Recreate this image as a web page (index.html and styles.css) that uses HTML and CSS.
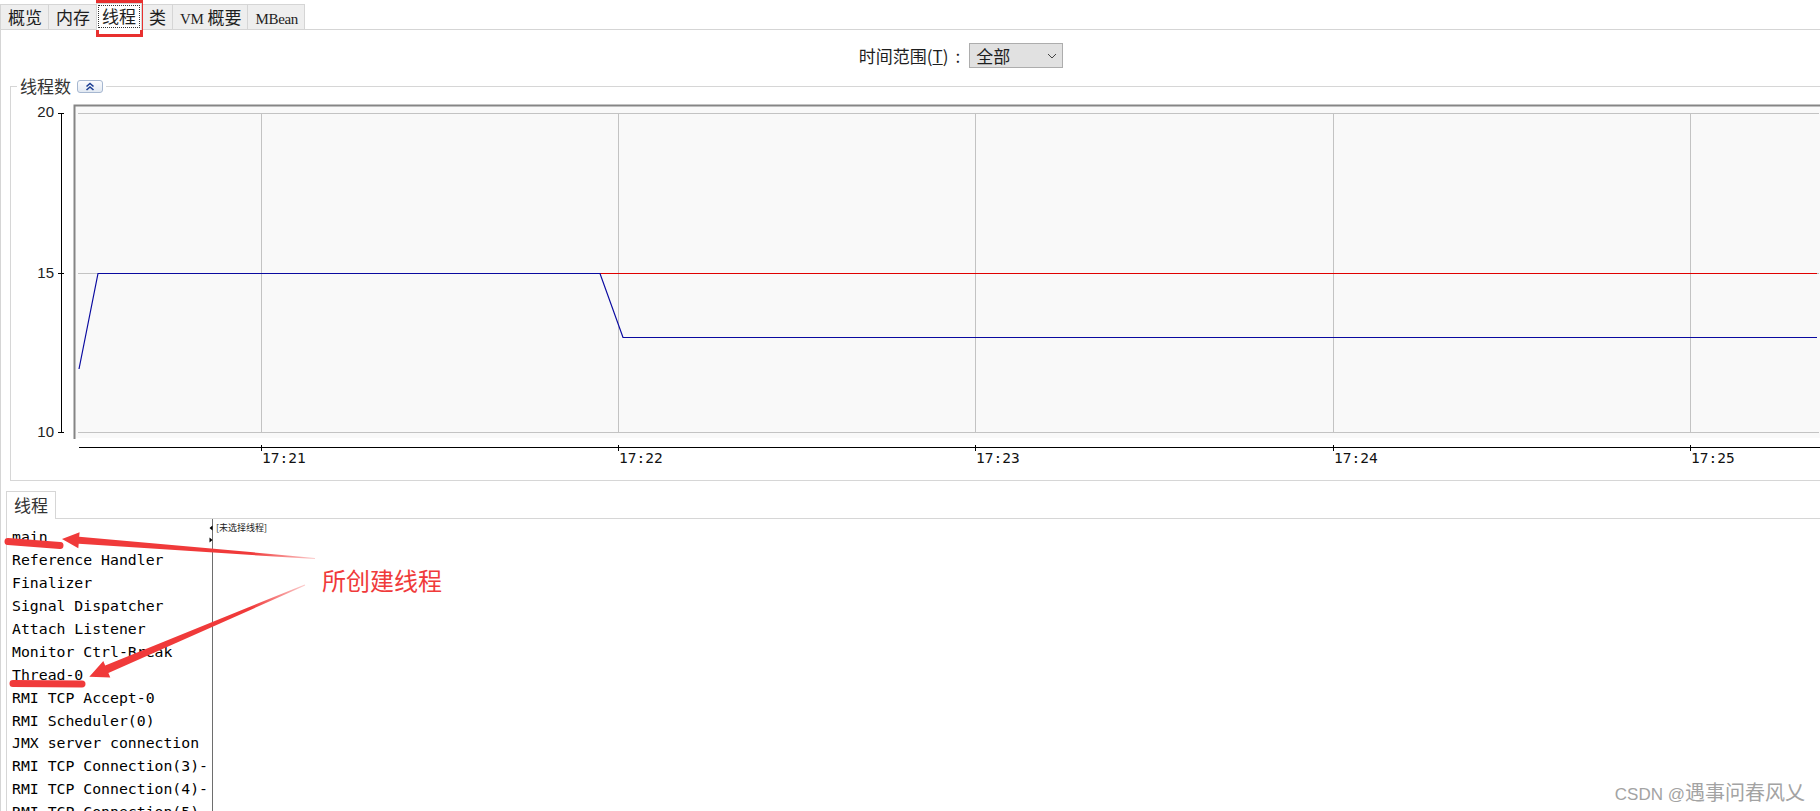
FILE: index.html
```html
<!DOCTYPE html>
<html lang="zh-CN">
<head>
<meta charset="utf-8">
<title>Java 监视和管理控制台 - 线程</title>
<link rel="stylesheet" href="styles.css">
</head>
<body>
<nav class="tabbar">
  <div class="tab">概览</div>
  <div class="tab">内存</div>
  <div class="tab active"><span class="focus">线程</span></div>
  <div class="tab">类</div>
  <div class="tab"><span class="lat">VM</span> 概要</div>
  <div class="tab"><span class="lat">MBean</span></div>
</nav>
<main class="content">
  <div class="range-row">
    <span class="range-label">时间范围(<u>T</u>)<span class="colon">:</span></span>
    <div class="select">
      <span>全部</span>
      <svg width="10" height="6" viewBox="0 0 10 6"><path d="M1 1 L5 5 L9 1" fill="none" stroke="#444" stroke-width="1"/></svg>
    </div>
  </div>

  <fieldset class="chart-box">
    <legend>
      <span>线程数</span>
      <span class="collapse">
        <svg width="10" height="9" viewBox="0 0 10 9"><path d="M1.5 4.5 L5 1.5 L8.5 4.5 M1.5 8 L5 5 L8.5 8" fill="none" stroke="#1c3f94" stroke-width="1.6"/></svg>
      </span>
    </legend>
    <svg class="chart" width="1809" height="385" viewBox="11 95 1809 385">
      <rect x="75" y="106" width="1750" height="332" fill="#f9f9f9"/>
      <path d="M74.5 439 V105.5 H1820" fill="none" stroke="#858585" stroke-width="2"/>
      <g stroke="#c3c3c3" stroke-width="1">
        <line x1="78" y1="113.5" x2="1819" y2="113.5"/>
        <line x1="78" y1="273.5" x2="1819" y2="273.5"/>
        <line x1="78" y1="432.5" x2="1819" y2="432.5"/>
        <line x1="261.5" y1="113" x2="261.5" y2="432"/>
        <line x1="618.5" y1="113" x2="618.5" y2="432"/>
        <line x1="975.5" y1="113" x2="975.5" y2="432"/>
        <line x1="1333.5" y1="113" x2="1333.5" y2="432"/>
        <line x1="1690.5" y1="113" x2="1690.5" y2="432"/>
      </g>
      <g stroke="#000" stroke-width="1">
        <line x1="61.5" y1="113" x2="61.5" y2="433"/>
        <line x1="58" y1="113.5" x2="64" y2="113.5"/>
        <line x1="58" y1="273.5" x2="64" y2="273.5"/>
        <line x1="58" y1="432.5" x2="64" y2="432.5"/>
        <line x1="79" y1="447.5" x2="1820" y2="447.5"/>
        <line x1="261.5" y1="445" x2="261.5" y2="451"/>
        <line x1="618.5" y1="445" x2="618.5" y2="451"/>
        <line x1="975.5" y1="445" x2="975.5" y2="451"/>
        <line x1="1333.5" y1="445" x2="1333.5" y2="451"/>
        <line x1="1690.5" y1="445" x2="1690.5" y2="451"/>
      </g>
      <text class="ylab" x="54" y="117" text-anchor="end">20</text>
      <text class="ylab" x="54" y="278" text-anchor="end">15</text>
      <text class="ylab" x="54" y="437" text-anchor="end">10</text>
      <text class="xlab" x="262" y="463">17:21</text>
      <text class="xlab" x="619" y="463">17:22</text>
      <text class="xlab" x="976" y="463">17:23</text>
      <text class="xlab" x="1334" y="463">17:24</text>
      <text class="xlab" x="1691" y="463">17:25</text>
      <polyline points="98,273.5 1817,273.5" fill="none" stroke="#e00000" stroke-width="1.2"/>
      <polyline points="79,369 98,273.5 600,273.5 623,337.5 1817,337.5" fill="none" stroke="#0a0aa0" stroke-width="1.2"/>
    </svg>
  </fieldset>

  <section class="lower">
    <div class="subtabs">
      <div class="subtab">线程</div>
      <div class="subfill"></div>
    </div>
    <div class="split">
      <ul class="threads">
        <li>main</li>
        <li>Reference Handler</li>
        <li>Finalizer</li>
        <li>Signal Dispatcher</li>
        <li>Attach Listener</li>
        <li>Monitor Ctrl-Break</li>
        <li>Thread-0</li>
        <li>RMI TCP Accept-0</li>
        <li>RMI Scheduler(0)</li>
        <li>JMX server connection</li>
        <li>RMI TCP Connection(3)-</li>
        <li>RMI TCP Connection(4)-</li>
        <li>RMI TCP Connection(5)-</li>
      </ul>
      <div class="divider">
        <svg width="4" height="18" viewBox="0 0 4 18"><path d="M3.5 0.5 L0.5 3 L3.5 5.5 Z M0.5 12.5 L3.5 15 L0.5 17.5 Z" fill="#000"/></svg>
      </div>
      <div class="detail">[未选择线程]</div>
    </div>
  </section>
</main>

<svg class="annot" width="1820" height="811" viewBox="0 0 1820 811">
  <defs>
    <linearGradient id="fade1" gradientUnits="userSpaceOnUse" x1="62" y1="539" x2="315" y2="558">
      <stop offset="0" stop-color="#f03a3a"/>
      <stop offset="0.75" stop-color="#f03a3a"/>
      <stop offset="1" stop-color="#f03a3a" stop-opacity="0.25"/>
    </linearGradient>
    <linearGradient id="fade2" gradientUnits="userSpaceOnUse" x1="89" y1="677" x2="305" y2="585">
      <stop offset="0" stop-color="#f03a3a"/>
      <stop offset="0.75" stop-color="#f03a3a"/>
      <stop offset="1" stop-color="#f03a3a" stop-opacity="0.25"/>
    </linearGradient>
  </defs>
  <rect x="97.5" y="1.5" width="44" height="34" fill="none" stroke="#e8302f" stroke-width="3"/>
  <polygon points="62,539 79.6,532.3 79.2,536.8 315,557.9 315,559.1 78.7,543.8 78.3,548.3" fill="url(#fade1)"/>
  <polygon points="89.3,676.7 103.3,661 105.2,665.6 304.8,584.4 305.2,585.6 108.4,673 110.3,677.6" fill="url(#fade2)"/>
  <path d="M8 541.5 L60 545.5" stroke="#f03a3a" stroke-width="7" stroke-linecap="round" fill="none"/>
  <path d="M13 683.5 L82 684" stroke="#f03a3a" stroke-width="7" stroke-linecap="round" fill="none"/>
</svg>
<div class="note">所创建线程</div>
<div class="watermark"><span class="wm-lat">CSDN @</span>遇事问春风乂</div>
</body>
</html>
```

FILE: styles.css
```css
* { box-sizing: border-box; }
html, body { margin: 0; padding: 0; }
body {
  width: 1820px;
  height: 811px;
  overflow: hidden;
  position: relative;
  background: #ffffff;
  color: #1e1e1e;
  font-family: "Noto Sans CJK SC", "Liberation Sans", sans-serif;
}

/* top tabs */
.tabbar {
  display: flex;
  align-items: flex-end;
  height: 29px;
}
.tab {
  height: 25px;
  padding: 0 6px 0 7px;
  margin-right: -1px;
  background: #eeeeee;
  border: 1px solid #d5d5d5;
  border-bottom: none;
  font-size: 17px;
  line-height: 23px;
  white-space: nowrap;
  color: #1e1e1e;
}
.tab .lat {
  font-family: "Liberation Serif", serif;
  font-size: 15px;
  letter-spacing: -0.3px;
}
.tab.active {
  height: 27px;
  margin-bottom: -1px;
  padding: 1px 1px 0;
  background: #ffffff;
  position: relative;
  z-index: 1;
}
.tab.active .focus {
  display: block;
  height: 23px;
  padding: 0 3px;
  border: 1px dotted #333333;
  line-height: 20px;
}

/* content */
.content {
  height: 782px;
  border-top: 1px solid #d5d5d5;
  border-left: 1px solid #d5d5d5;
}
.range-row {
  display: flex;
  justify-content: center;
  align-items: center;
  height: 38px;
  padding: 13px 0 0 101px;
}
.range-label {
  font-size: 17px;
  line-height: 25px;
  margin-right: 9px;
  color: #1e1e1e;
}
.range-label .colon { margin-left: 7px; }
.select {
  display: flex;
  align-items: center;
  justify-content: space-between;
  width: 94px;
  height: 25px;
  padding: 0 5px 0 6px;
  background: #e1e1e1;
  border: 1px solid #adadad;
  font-size: 17px;
  line-height: 23px;
  color: #1e1e1e;
}

/* chart */
.chart-box {
  min-width: 0;
  margin: 9px 0 0 9px;
  padding: 0;
  border: 1px solid #d6d6d6;
  border-right: none;
}
.chart-box legend {
  display: flex;
  align-items: center;
  gap: 6px;
  height: 18px;
  margin-left: 6px;
  padding: 0 3px;
  font-size: 17px;
  line-height: 18px;
  color: #333333;
}
.collapse {
  display: flex;
  align-items: center;
  justify-content: center;
  width: 26px;
  height: 13px;
  border: 1px solid #a6b7d0;
  border-radius: 3px;
  background: linear-gradient(#fbfcfe, #e2e9f2);
}
.chart { display: block; }
.ylab {
  font-family: "Liberation Sans", sans-serif;
  font-size: 15px;
  fill: #222222;
}
.xlab {
  font-family: "DejaVu Sans Mono", monospace;
  font-size: 14.5px;
  fill: #111111;
}

/* lower thread panel */
.lower { margin: 10px 0 0 5px; }
.subtabs {
  display: flex;
  height: 28px;
}
.subtab {
  width: 50px;
  border: 1px solid #d6d6d6;
  border-bottom: none;
  text-align: center;
  font-size: 17px;
  line-height: 26px;
  color: #333333;
}
.subfill {
  flex: 1;
  border-bottom: 1px solid #d6d6d6;
}
.split {
  display: flex;
  height: 292px;
  border-left: 1px solid #d6d6d6;
}
.threads {
  list-style: none;
  margin: 0;
  padding: 7px 0 0 5px;
  width: 201px;
  overflow: hidden;
  white-space: nowrap;
  font-family: "DejaVu Sans Mono", monospace;
  font-size: 14.8px;
  line-height: 22.93px;
  color: #000000;
}
.divider {
  width: 5px;
  padding: 6px 0 0 1px;
  border-right: 1px solid #6e6e6e;
}
.divider svg { display: block; }
.detail {
  padding: 3px 0 0 3px;
  font-size: 9px;
  line-height: 12px;
  color: #222222;
}

/* annotations */
.annot {
  position: absolute;
  left: 0;
  top: 0;
  pointer-events: none;
}
.note {
  position: absolute;
  left: 322px;
  top: 563px;
  font-size: 24px;
  line-height: 34px;
  color: #f03a3a;
}
.watermark {
  position: absolute;
  right: 15px;
  top: 779px;
  font-size: 20px;
  line-height: 26px;
  color: #a3a3a3;
  white-space: nowrap;
}
.wm-lat {
  font-family: "Liberation Sans", sans-serif;
  font-size: 17px;
}
```
